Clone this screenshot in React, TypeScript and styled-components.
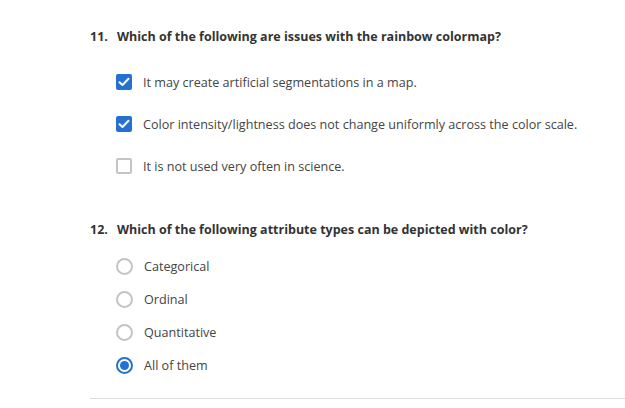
import React from "react";
import styled, { createGlobalStyle } from "styled-components";

const GlobalStyle = createGlobalStyle`
  body {
    margin: 0;
    background: #ffffff;
    font-family: "Open Sans", "Liberation Sans", sans-serif;
  }
`;

const Page = styled.div`
  width: 625px;
  height: 408px;
  padding: 27px 0 0 90px;
  box-sizing: border-box;
  overflow: hidden;
`;

const Question = styled.section<{ gapAfter: number }>`
  margin-bottom: ${(p) => p.gapAfter}px;
`;

const Title = styled.h2`
  display: flex;
  margin: 0;
  font-size: 12.5px;
  line-height: 20px;
  font-weight: 700;
  color: #333333;
`;

const Num = styled.span`
  width: 27px;
  flex-shrink: 0;
`;

const Options = styled.ul<{ rowHeight: number; top: number }>`
  list-style: none;
  margin: ${(p) => p.top}px 0 0 26px;
  padding: 0;
  li {
    height: ${(p) => p.rowHeight}px;
  }
`;

const Option = styled.li`
  display: flex;
  align-items: center;
  gap: 11px;
  font-size: 12.6px;
  color: #444444;
`;

const Box = styled.span<{ checked?: boolean }>`
  width: 16px;
  height: 16px;
  box-sizing: border-box;
  border-radius: 2px;
  flex-shrink: 0;
  display: flex;
  align-items: center;
  justify-content: center;
  background: ${(p) => (p.checked ? "#2571d0" : "#fff")};
  border: ${(p) => (p.checked ? "none" : "2px solid #c4c4c4")};
`;

const Radio = styled.span<{ checked?: boolean }>`
  width: 17px;
  height: 17px;
  box-sizing: border-box;
  border-radius: 50%;
  flex-shrink: 0;
  display: flex;
  align-items: center;
  justify-content: center;
  border: 2px solid ${(p) => (p.checked ? "#2571d0" : "#c4c4c4")};
  &::after {
    content: "";
    display: ${(p) => (p.checked ? "block" : "none")};
    width: 9px;
    height: 9px;
    border-radius: 50%;
    background: #2571d0;
  }
`;

const Rule = styled.hr`
  margin: 0;
  border: none;
  border-top: 1px solid #dcdcdc;
`;

const Tick = () => (
  <svg width="12" height="10" viewBox="0 0 12 10">
    <path d="M1.5 5.2 L4.5 8 L10.5 1.8" fill="none" stroke="#fff" strokeWidth="2" strokeLinecap="round" strokeLinejoin="round" />
  </svg>
);

const q11 = [
  { text: "It may create artificial segmentations in a map.", checked: true },
  { text: "Color intensity/lightness does not change uniformly across the color scale.", checked: true },
  { text: "It is not used very often in science.", checked: false },
];

const q12 = [
  { text: "Categorical", checked: false },
  { text: "Ordinal", checked: false },
  { text: "Quantitative", checked: false },
  { text: "All of them", checked: true },
];

export default function App() {
  return (
    <Page>
      <GlobalStyle />
      <Question gapAfter={33}>
        <Title>
          <Num>11.</Num>
          Which of the following are issues with the rainbow colormap?
        </Title>
        <Options rowHeight={42} top={14}>
          {q11.map((o) => (
            <Option key={o.text}>
              <Box checked={o.checked}>{o.checked && <Tick />}</Box>
              {o.text}
            </Option>
          ))}
        </Options>
      </Question>
      <Question gapAfter={16}>
        <Title>
          <Num>12.</Num>
          Which of the following attribute types can be depicted with color?
        </Title>
        <Options rowHeight={33} top={10}>
          {q12.map((o) => (
            <Option key={o.text}>
              <Radio checked={o.checked} />
              {o.text}
            </Option>
          ))}
        </Options>
      </Question>
      <Rule />
    </Page>
  );
}
